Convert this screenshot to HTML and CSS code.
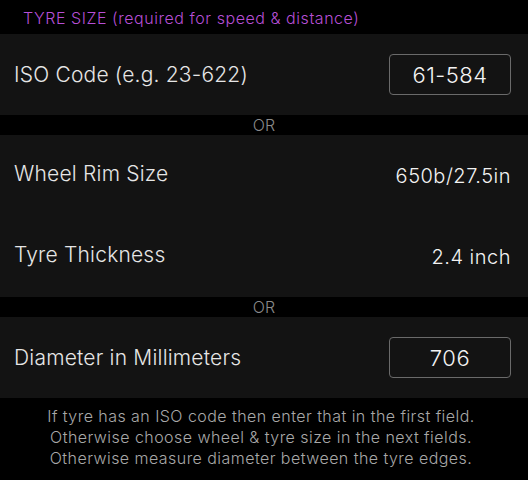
FILE: index.html
```html
<!DOCTYPE html>
<html>
<head>
<meta charset="utf-8">
<link rel="stylesheet" href="styles.css">
</head>
<body>
<div class="screen">
  <div class="header">TYRE SIZE (required for speed &amp; distance)</div>
  <div class="group">
    <div class="row">
      <span class="label">ISO Code (e.g. 23-622)</span>
      <span class="field">61-584</span>
    </div>
  </div>
  <div class="sep">OR</div>
  <div class="group">
    <div class="row">
      <span class="label">Wheel Rim Size</span>
      <span class="value">650b/27.5in</span>
    </div>
    <div class="row">
      <span class="label">Tyre Thickness</span>
      <span class="value">2.4 inch</span>
    </div>
  </div>
  <div class="sep">OR</div>
  <div class="group">
    <div class="row">
      <span class="label">Diameter in Millimeters</span>
      <span class="field">706</span>
    </div>
  </div>
  <div class="note">
    If tyre has an ISO code then enter that in the first field.<br>
    Otherwise choose wheel &amp; tyre size in the next fields.<br>
    Otherwise measure diameter between the tyre edges.
  </div>
</div>
</body>
</html>
```

FILE: styles.css
```css
html, body {
  margin: 0;
  padding: 0;
  background: #000;
}
.screen {
  width: 528px;
  height: 480px;
  background: #000;
  font-family: Inter, "Noto Sans", sans-serif;
  font-weight: 300;
  display: flex;
  flex-direction: column;
}
.header {
  height: 34px;
  box-sizing: border-box;
  padding: 8px 0 0 23px;
  color: #b64fd6;
  font-size: 16px;
  line-height: 20px;
  letter-spacing: 0.55px;
}
.group {
  background: #131313;
}
.row {
  height: 81px;
  display: flex;
  align-items: center;
  justify-content: space-between;
  padding: 0 17px 0 14px;
}
.label {
  color: #e6e6e6;
  font-size: 21px;
  letter-spacing: 0.2px;
  margin-top: -4px;
}
.value {
  color: #f2f2f2;
  font-size: 20px;
  letter-spacing: 0.5px;
}
.field {
  width: 122px;
  height: 41px;
  box-sizing: border-box;
  border: 1px solid #6a6a6a;
  border-radius: 4px;
  display: flex;
  align-items: center;
  justify-content: center;
  color: #f4f4f4;
  font-size: 22px;
  letter-spacing: 0.5px;
}
.row:only-child .label {
  margin-top: 0;
}
.sep {
  height: 20px;
  line-height: 20px;
  text-align: center;
  color: #8a8a8a;
  font-size: 16px;
}
.note {
  padding: 8px 6px 0 0;
  text-align: center;
  color: #a8a8a8;
  font-size: 16px;
  line-height: 21px;
  letter-spacing: 0.45px;
}
```
